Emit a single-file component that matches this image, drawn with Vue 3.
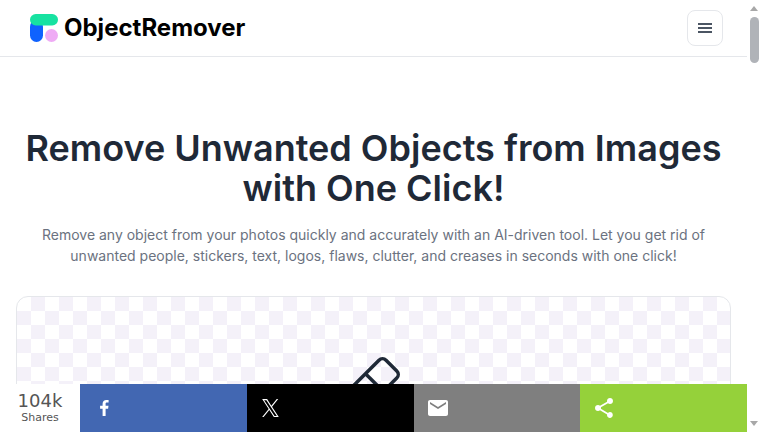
<script setup>
const shares = [
  { name: 'facebook', color: '#4267b2' },
  { name: 'x', color: '#000000' },
  { name: 'email', color: '#7f7f7f' },
  { name: 'share', color: '#95d13a' },
]
</script>

<template>
  <div class="viewport">
    <div class="page">
      <header class="topbar">
        <div class="brand">
          <svg class="logo" width="28" height="28" viewBox="0 0 28 28">
            <rect x="0" y="6" width="13" height="22" rx="6.5" fill="#0f62fe" />
            <circle cx="21.500" cy="21.500" r="6.500" fill="#efabf5" />
            <rect x="0" y="0" width="28" height="11.500" rx="5.750" fill="#17e2a1" />
          </svg>
          <span class="brand-name">ObjectRemover</span>
        </div>
        <button class="menu" aria-label="Menu">
          <svg width="14" height="10" viewBox="0 0 14 10">
            <path d="M0 1h14M0 5h14M0 9h14" stroke="#4b5563" stroke-width="2" fill="none" />
          </svg>
        </button>
      </header>

      <main class="hero">
        <h1>Remove Unwanted Objects from Images with One Click!</h1>
        <p>Remove any object from your photos quickly and accurately with an AI-driven tool. Let you get rid of unwanted people, stickers, text, logos, flaws, clutter, and creases in seconds with one click!</p>
        <div class="dropzone">
          <svg class="eraser" width="56" height="56" viewBox="0 0 56 56">
            <g transform="translate(36.500 3.700) rotate(45)" fill="none" stroke="#1f2937" stroke-width="3.500">
              <rect x="0" y="0" width="25.200" height="50" rx="5" />
              <line x1="0" y1="24" x2="25.200" y2="24" />
            </g>
          </svg>
        </div>
      </main>
    </div>

    <div class="sharebar">
      <div class="count">
        <span class="num">104k</span>
        <span class="lbl">Shares</span>
      </div>
      <a v-for="s in shares" :key="s.name" class="btn" :style="{ background: s.color }">
        <span class="ico">
          <svg v-if="s.name === 'facebook'" width="24" height="24" viewBox="0 0 24 24">
            <path d="M13.600 20v-7.300h2.500l.4-2.900h-2.900V8c0-.8.2-1.400 1.400-1.400h1.600V4.100c-.3 0-1.200-.1-2.300-.1-2.200 0-3.700 1.300-3.700 3.800v2H8.100v2.900h2.500V20z" fill="#fff" />
          </svg>
          <svg v-else-if="s.name === 'x'" width="17" height="18" viewBox="0 0 24 24" preserveAspectRatio="none">
            <path d="M14.200 10.200 22.900 0h-2.100l-7.600 8.900L7.200 0H.2l9.200 13.400L.2 24h2.100l8-9.400 6.400 9.400h7zM3 1.600h3.200l14.700 20.900h-3.200z" fill="#fff" />
          </svg>
          <svg v-else-if="s.name === 'email'" width="24" height="24" viewBox="0 0 24 24">
            <path d="M20 4H4c-1.100 0-2 .9-2 2v12c0 1.100.9 2 2 2h16c1.100 0 2-.9 2-2V6c0-1.100-.9-2-2-2zm0 4-8 5-8-5V6l8 5 8-5z" fill="#fff" />
          </svg>
          <svg v-else width="24" height="24" viewBox="0 0 24 24">
            <path d="M18 16.100c-.8 0-1.500.3-2 .8l-7.100-4.200c.1-.2.1-.5.1-.7s0-.5-.1-.7L16 7.200c.5.500 1.200.8 2 .8 1.700 0 3-1.300 3-3s-1.300-3-3-3-3 1.300-3 3c0 .2 0 .5.100.7L8 9.800C7.500 9.300 6.800 9 6 9c-1.700 0-3 1.300-3 3s1.300 3 3 3c.8 0 1.500-.3 2-.8l7.100 4.200c-.1.200-.1.400-.1.600 0 1.600 1.300 2.900 2.900 2.900s2.900-1.300 2.900-2.900-1.200-2.900-2.800-2.900z" fill="#fff" />
          </svg>
        </span>
      </a>
    </div>

    <div class="scrollbar">
      <span class="arrow up"></span>
      <span class="thumb"></span>
      <span class="arrow down"></span>
    </div>
  </div>
</template>

<style>
html, body { margin: 0; overflow: hidden; background: #fff; }
</style>

<style scoped>
.viewport {
  position: relative;
  width: 762px;
  height: 432px;
  overflow: hidden;
  font-family: Inter, "Liberation Sans", sans-serif;
}
.page { width: 747px; }
.topbar {
  height: 56px;
  border-bottom: 1px solid #e5e7eb;
  display: flex;
  align-items: center;
  justify-content: space-between;
  padding: 0 24px 0 30px;
  box-sizing: content-box;
}
.brand { display: flex; align-items: center; gap: 6px; }
.logo { display: block; }
.brand-name { font-size: 24px; font-weight: 700; color: #000; line-height: 32px; }
.menu {
  width: 36px;
  height: 36px;
  padding: 0;
  border: 1px solid #e5e7eb;
  border-radius: 8px;
  background: #fff;
  display: flex;
  align-items: center;
  justify-content: center;
}
.hero { padding: 71px 16px 0; text-align: center; }
h1 {
  margin: 0;
  font-size: 36px;
  line-height: 40px;
  font-weight: 600;
  color: #1f2937;
}
p {
  margin: 16px 0 0;
  font-size: 14px;
  line-height: 21px;
  color: #6b7280;
}
.dropzone {
  margin-top: 30px;
  height: 300px;
  border: 1px solid #e5e7eb;
  border-radius: 12px;
  box-sizing: border-box;
  display: flex;
  justify-content: center;
  padding-top: 56px;
  background-color: #fff;
  background-image: conic-gradient(#f4f1f9 25%, #fff 0 50%, #f4f1f9 0 75%, #fff 0);
  background-size: 28px 28px;
  background-position: 0 0;
}
.eraser { display: block; overflow: visible; }
.sharebar {
  position: absolute;
  left: 0;
  bottom: 0;
  width: 747px;
  height: 48px;
  display: flex;
  background: #fff;
}
.count {
  width: 80px;
  display: flex;
  flex-direction: column;
  align-items: center;
  justify-content: center;
  color: #555;
  font-family: "DejaVu Sans", sans-serif;
}
.num { font-size: 18px; line-height: 20px; }
.lbl { font-size: 11px; line-height: 14px; }
.btn {
  flex: 1;
  display: flex;
  align-items: center;
  padding-left: 12px;
}
.ico {
  width: 24px;
  height: 24px;
  display: flex;
  align-items: center;
  justify-content: center;
}
.btn svg { display: block; }
.scrollbar {
  position: absolute;
  top: 0;
  right: 0;
  width: 15px;
  height: 432px;
  background: #fff;
}
.thumb {
  position: absolute;
  left: 3px;
  top: 17px;
  width: 9px;
  height: 46px;
  border-radius: 5px;
  background: #b0b3b8;
}
.arrow {
  position: absolute;
  left: 3px;
  width: 0;
  height: 0;
  border-left: 4.5px solid transparent;
  border-right: 4.5px solid transparent;
}
.up { top: 6px; border-bottom: 5px solid #a8a8a8; }
.down { bottom: 6px; border-top: 5px solid #a8a8a8; }
</style>
